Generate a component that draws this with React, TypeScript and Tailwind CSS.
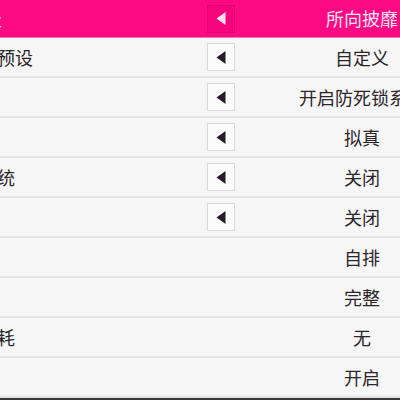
const ROWS = [
  { label: '辅助项预设', value: '自定义', arrow: true },
  { label: '刹车', value: '开启防死锁系统', arrow: true },
  { label: '转向', value: '拟真', arrow: true },
  { label: '牵引系统', value: '关闭', arrow: true },
  { label: '稳定性', value: '关闭', arrow: true },
  { label: '换挡', value: '自排', arrow: false },
  { label: '赛车线', value: '完整', arrow: false },
  { label: '燃油消耗', value: '无', arrow: false },
  { label: '倒带', value: '开启', arrow: false },
]

function Arrow({ header }: { header?: boolean }) {
  return (
    <div
      className={
        header
          ? 'w-[28px] h-[28px] shrink-0 flex items-center justify-center border-[1.5px] border-[#dc0070] bg-[#f5047c]'
          : 'w-[28px] h-[28px] shrink-0 flex items-center justify-center border-[1.5px] border-[#d9d9d9] bg-[#fbfbfb]'
      }
    >
      <svg width="10" height="13" viewBox="0 0 10 13">
        <polygon points="9.5,0 9.5,13 0.5,6.5" fill={header ? '#ffe3f1' : '#2a1a2c'} />
      </svg>
    </div>
  )
}

export default function App() {
  return (
    <div
      className="w-[400px] h-[400px] overflow-hidden bg-[#f6f6f6] flex flex-col"
      style={{ fontFamily: '"Noto Sans CJK SC", "Noto Sans", sans-serif' }}
    >
      <div className="h-[38px] shrink-0 flex items-center bg-[#fc0a84] border-b border-[#ff6fb4] text-[18px] text-[#ffe3f1]">
        <div className="w-[207px] shrink-0 overflow-hidden whitespace-nowrap">
          <span className="ml-[-70px] inline-block">难度等级</span>
        </div>
        <Arrow header />
        <div className="w-[89px] shrink-0" />
        <div className="w-[76px] shrink-0 flex justify-center whitespace-nowrap">所向披靡</div>
      </div>

      {ROWS.map(row => (
        <div
          key={row.label}
          className="h-[40px] shrink-0 flex items-center border-b-2 border-[#e4e4e4] text-[18px] text-[#2a2529]"
        >
          <div className="w-[207px] shrink-0 overflow-hidden whitespace-nowrap">
            <span className="ml-[-57px] inline-block">{row.label}</span>
          </div>
          {row.arrow ? <Arrow /> : <div className="w-[28px] shrink-0" />}
          <div className="w-[89px] shrink-0" />
          <div className="w-[76px] shrink-0 flex justify-center whitespace-nowrap">{row.value}</div>
        </div>
      ))}

      <div className="flex-1 bg-[#3a3a3c]" />
    </div>
  )
}
